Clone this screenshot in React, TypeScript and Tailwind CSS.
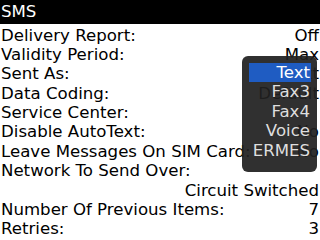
import React from "react";

type Row = { label: string; value?: string };

const rows: Row[] = [
  { label: "Delivery Report:", value: "Off" },
  { label: "Validity Period:", value: "Max" },
  { label: "Sent As:", value: "Text" },
  { label: "Data Coding:", value: "Default" },
  { label: "Service Center:", value: "" },
  { label: "Disable AutoText:", value: "No" },
  { label: "Leave Messages On SIM Card:", value: "No" },
  { label: "Network To Send Over:" },
  { label: "", value: "Circuit Switched" },
  { label: "Number Of Previous Items:", value: "7" },
  { label: "Retries:", value: "3" },
];

const options = ["Text", "Fax3", "Fax4", "Voice", "ERMES"];

export default function App() {
  return (
    <div
      className="relative h-[240px] w-[320px] overflow-hidden bg-white text-black"
      style={{ fontFamily: '"DejaVu Sans", sans-serif' }}
    >
      <div className="flex h-[24px] items-center bg-black px-[1px] text-[16.6px] leading-[19.5px] text-white">SMS</div>

      <div className="flex flex-col pt-[1.5px] text-[16.6px] leading-[19.4px]">
        {rows.map((row, i) => (
          <div key={i} className="flex h-[19.4px] justify-between whitespace-nowrap pl-[1px] pr-[1px]">
            <span>{row.label}</span>
            <span>{row.value}</span>
          </div>
        ))}
      </div>

      {/* choice popup */}
      <div className="absolute left-[242px] top-[56px] flex h-[116px] w-[75px] flex-col rounded-[6px] bg-[#202020]/[0.93] pt-[7px] pl-[7px] pr-[6px] text-[16.6px] leading-[19.4px] text-[#dedede]">
        {options.map((opt, i) => (
          <div
            key={opt}
            className={`h-[19.4px] pr-[1px] text-right ${i === 0 ? "bg-[#1f5cc2] text-white" : ""}`}
          >
            {opt}
          </div>
        ))}
      </div>
    </div>
  );
}
